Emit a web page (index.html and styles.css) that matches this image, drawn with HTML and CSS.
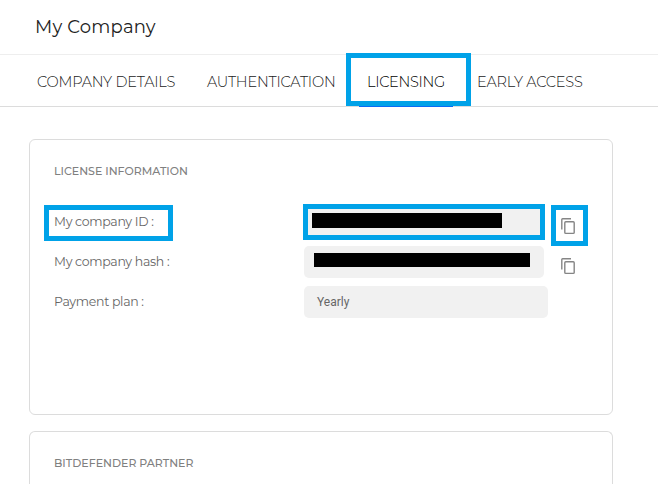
FILE: index.html
```html
<!DOCTYPE html>
<html lang="en">
<head>
<meta charset="utf-8">
<title>My Company</title>
<link rel="stylesheet" href="styles.css">
</head>
<body>
<header class="header"><h1 class="title">My Company</h1></header>
<nav class="tabs">
  <a class="tab tab-details">COMPANY DETAILS</a>
  <a class="tab tab-auth">AUTHENTICATION</a>
  <a class="tab tab-active">LICENSING<span class="mark mark-tab"></span></a>
  <a class="tab tab-early">EARLY ACCESS</a>
</nav>
<main class="content">
  <section class="card card-license">
    <h2 class="heading">LICENSE INFORMATION</h2>
    <div class="row">
      <span class="label">My company ID :<span class="mark mark-label"></span></span>
      <div class="field"><span class="redacted redacted-id"></span><span class="mark mark-field"></span></div>
      <span class="copy">
        <svg width="16" height="18" viewBox="0 0 16 18"><path d="M1.8 12.5V2.5Q1.8 1.7 2.6 1.7H11"/><rect x="4.8" y="4.8" width="9.4" height="11.6" rx="1"/></svg>
        <span class="mark mark-copy"></span>
      </span>
    </div>
    <div class="row">
      <span class="label">My company hash :</span>
      <div class="field"><span class="redacted redacted-hash"></span></div>
      <span class="copy">
        <svg width="16" height="18" viewBox="0 0 16 18"><path d="M1.8 12.5V2.5Q1.8 1.7 2.6 1.7H11"/><rect x="4.8" y="4.8" width="9.4" height="11.6" rx="1"/></svg>
      </span>
    </div>
    <div class="row">
      <span class="label">Payment plan :</span>
      <div class="field field-plan">Yearly</div>
    </div>
  </section>
  <section class="card card-partner">
    <h2 class="heading">BITDEFENDER PARTNER</h2>
  </section>
</main>
</body>
</html>
```
FILE: styles.css
```css
* { box-sizing: border-box; }
body {
  margin: 0;
  background: #fff;
  color: #555;
  font-family: Montserrat, Inter, "Open Sans", sans-serif;
}
.header {
  height: 55px;
  padding: 15px 35px 0;
  border-bottom: 1px solid #eee;
}
.title {
  margin: 0;
  font-size: 18px;
  line-height: 24px;
  font-weight: 400;
  letter-spacing: 0.2px;
  color: #222;
}
.tabs {
  display: flex;
  height: 52px;
  padding-left: 29px;
  border-bottom: 1px solid #dcdcdc;
}
.tab {
  position: relative;
  flex: none;
  height: 52px;
  padding: 0 8px;
  font-size: 14.5px;
  line-height: 54px;
  font-weight: 300;
  letter-spacing: -0.2px;
  white-space: nowrap;
  color: #222;
}
.tab-details { width: 170px; }
.tab-auth { width: 160px; }
.tab-active {
  width: 94px;
  margin-right: 16px;
  letter-spacing: -0.3px;
  color: #000;
  border-bottom: 1px solid #0a6cf5;
}
.mark {
  position: absolute;
  border: 5px solid #00a2e8;
}
.mark-tab { left: -13px; top: -2px; width: 125px; height: 53px; }
.content { padding: 32px 45px 0 29px; }
.card {
  border: 1px solid #dcdcdc;
  border-radius: 6px;
  padding: 24px;
}
.card-license { height: 276px; margin-bottom: 16px; }
.card-partner {
  height: 53px;
  border-bottom: 0;
  border-radius: 6px 6px 0 0;
  padding-bottom: 0;
}
.heading {
  margin: 0 0 27px;
  font-size: 11px;
  line-height: 15px;
  font-weight: 500;
  color: #808080;
}
.card-partner .heading { margin-bottom: 0; }
.row {
  display: flex;
  height: 32px;
  margin-bottom: 8px;
}
.label {
  position: relative;
  width: 250px;
  font-size: 12.5px;
  line-height: 31px;
  font-weight: 400;
  letter-spacing: -0.3px;
  color: #666;
}
.mark-label { left: -10px; top: -1px; width: 129px; height: 36px; }
.field {
  position: relative;
  width: 240px;
  height: 32px;
  border-radius: 5px;
  background: #f1f1f1;
}
.field-plan {
  width: 244px;
  padding-left: 13px;
  font: 12px/32px Roboto, sans-serif;
  color: #666;
}
.redacted { display: block; background: #000; }
.redacted-id { width: 190px; height: 15px; margin: 7px 0 0 8px; }
.redacted-hash { width: 216px; height: 14px; margin: 7px 0 0 10px; }
.mark-field { left: -1px; top: -2px; width: 242px; height: 36px; }
.copy {
  position: relative;
  width: 16px;
  height: 32px;
  margin-left: 16px;
  padding-top: 11px;
}
.copy svg {
  display: block;
  fill: none;
  stroke: #858585;
  stroke-width: 1.4;
}
.mark-copy { left: -9px; top: -1px; width: 37px; height: 41px; }
```
